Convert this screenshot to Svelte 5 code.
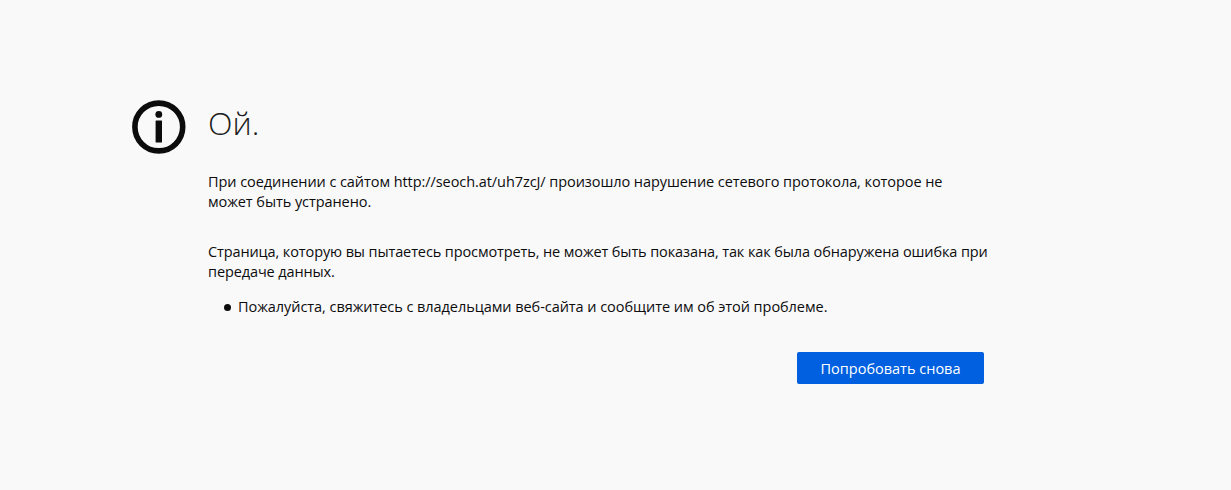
<script>
	const url = 'http://seoch.at/uh7zcJ/';
</script>

<main class="page">
	<svg class="icon" width="54" height="54" viewBox="0 0 54 54" aria-hidden="true">
		<circle cx="26.8" cy="27" r="23.9" fill="none" stroke="#0c0c0d" stroke-width="5.6" />
		<circle cx="26.8" cy="14.4" r="3.4" fill="#0c0c0d" />
		<rect x="23.6" y="20.5" width="6.4" height="22" rx="0.5" fill="#0c0c0d" />
	</svg>
	<div class="content">
		<h1>Ой.</h1>
		<p class="first">При соединении с сайтом {url} произошло нарушение сетевого протокола, которое не может быть устранено.</p>
		<p class="second">Страница, которую вы пытаетесь просмотреть, не может быть показана, так как была обнаружена ошибка при передаче данных.</p>
		<ul>
			<li>Пожалуйста, свяжитесь с владельцами веб-сайта и сообщите им об этой проблеме.</li>
		</ul>
		<div class="actions">
			<button type="button">Попробовать снова</button>
		</div>
	</div>
</main>

<style>
	:global(body) {
		background: #f9f9fa;
		color: #0c0c0d;
		font-family: "Open Sans", "Noto Sans", sans-serif;
	}

	.page {
		display: flex;
		align-items: flex-start;
		gap: 22px;
		height: 490px;
		box-sizing: border-box;
		padding: 100px 0 0 132px;
	}

	.icon {
		flex-shrink: 0;
	}

	.content {
		width: 776px;
	}

	h1 {
		margin: 0;
		font-size: 32px;
		font-weight: 300;
		line-height: 46px;
		color: #1c1c20;
	}

	p {
		margin: 0;
		font-size: 14.5px;
		line-height: 20px;
		letter-spacing: -0.11px;
	}

	.first {
		margin-top: 26px;
		width: 750px;
		letter-spacing: -0.07px;
	}

	.second {
		margin-top: 30px;
		width: 790px;
	}

	ul {
		margin: 15px 0 0;
		padding: 0 0 0 30px;
		list-style: none;
		font-size: 14.5px;
		line-height: 20px;
		letter-spacing: -0.05px;
	}

	li {
		position: relative;
	}

	li::before {
		content: "";
		position: absolute;
		left: -14px;
		top: 7px;
		width: 7px;
		height: 7px;
		border-radius: 50%;
		background: #0c0c0d;
	}

	.actions {
		display: flex;
		justify-content: flex-end;
		margin-top: 35px;
	}

	button {
		width: 187px;
		height: 32px;
		border: none;
		border-radius: 2px;
		background: #0060df;
		color: #fff;
		font: inherit;
		font-size: 14.5px;
		padding: 0;
	}
</style>
